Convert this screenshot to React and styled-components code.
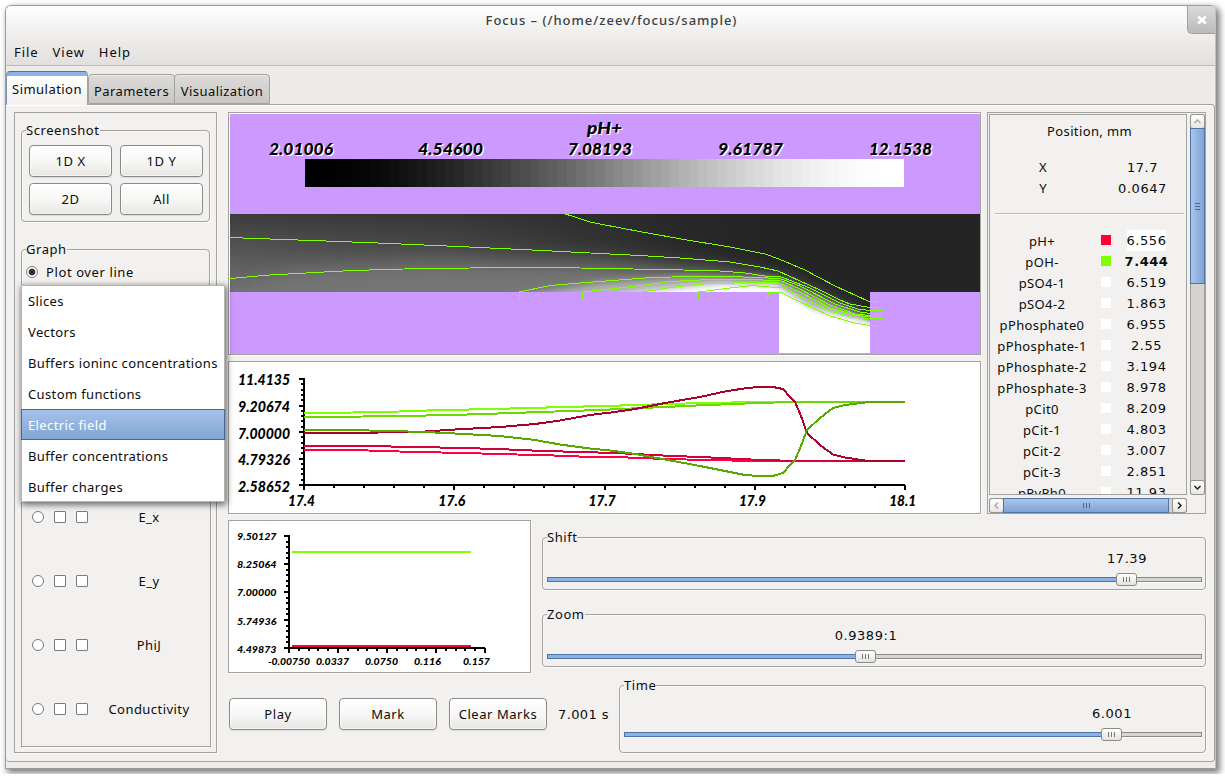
import React from "react";
import styled, { createGlobalStyle, css } from "styled-components";

const Global = createGlobalStyle`
  *, *::before, *::after { box-sizing: border-box; }
  body {
    margin: 0;
    background: #fff;
    color: #0c0c0c;
    font: 13px/18px "Noto Sans", "Open Sans", sans-serif;
    letter-spacing: 0.37px;
    overflow: hidden;
  }
`;

const LINE = "#a3a29f";
const digits = css`font-family: "DejaVu Sans", sans-serif; font-size: 13px; letter-spacing: 0.55px;`;

const Window = styled.div`
  width: 1211px;
  height: 764px;
  margin: 5px;
  display: flex;
  flex-direction: column;
  background: #edecea;
  border: 1px solid #9b9b9a;
  border-right-color: #c2c2c0;
  border-radius: 6px 6px 0 0;
  box-shadow: 3px 3px 6px 1px rgba(0, 0, 0, 0.5);
`;

const Header = styled.header`
  height: 60px;
  flex: none;
  border-bottom: 1px solid #bcbbb9;
  border-radius: 5px 5px 0 0;
  background: linear-gradient(#fefefe, #efeeed 50%, #e1e0de);
`;

const TitleBar = styled.div`
  height: 28px;
  display: grid;
  grid-template-columns: 1fr 28px;
`;

const Title = styled.div`
  padding: 5px 0 0 6px;
  text-align: center;
  color: #3a3f42;
  font-weight: 500;
  letter-spacing: 0.99px;
  text-indent: 24px;
`;

const Close = styled.div`
  display: grid;
  place-items: center;
  border: solid #a2a2a1;
  border-width: 0 0 1px 1px;
  border-radius: 0 4px 0 5px;
  background: linear-gradient(#dadada, #bababa);
`;

const MenuBar = styled.nav`
  display: flex;
  gap: 14px;
  padding: 9px 8px 0;
  letter-spacing: 0.95px;
`;

const Tabs = styled.div`
  height: 38px;
  flex: none;
  display: flex;
  align-items: flex-end;
`;

const Tab = styled.div`
  width: ${(p) => p.$w}px;
  height: 30px;
  margin-right: ${(p) => (p.$active ? 0 : -1)}px;
  padding-top: 7px;
  text-align: center;
  letter-spacing: 0.45px;
  white-space: nowrap;
  border: 1px solid ${LINE};
  border-radius: 4px 4px 0 0;
  background: linear-gradient(#dddcda, #c8c7c4);
  box-shadow: inset 0 1px #eee;
  ${(p) => p.$active && css`
    height: 34px;
    padding-top: 8px;
    border-bottom: 0;
    border-top-color: #4d74a9;
    border-left-color: #8096b5;
    background: linear-gradient(#8fb3e0 0 4px, #fff 4px, #f2f1ef);
    box-shadow: none;
    margin-bottom: -1px;
    position: relative;
    z-index: 1;
  `}
`;

const Page = styled.main`
  height: 658px;
  width: 1209px;
  padding: 7px 8px 0;
  display: flex;
  gap: 11px;
  background: #f2f1ef;
  border: 1px solid ${LINE};
  border-width: 1px 1px 1px 0;
  border-radius: 0 4px 4px 4px;
  box-shadow: inset 0 1px #fff;
`;

const Side = styled.aside`
  width: 203px;
  height: 641px;
  flex: none;
  padding: 17px 6px 5px;
  display: flex;
  flex-direction: column;
  border: 1px solid ${LINE};
  box-shadow: 1px 1px #fbfbfa;
  position: relative;
`;

const Group = styled.section`
  width: ${(p) => p.$w}px;
  height: ${(p) => p.$h}px;
  flex: none;
  border: 1px solid ${LINE};
  border-radius: 4px;
  box-shadow: 1px 1px #fbfbfa, inset 1px 1px #fafaf9;
`;

const GraphGroup = styled(Group)`
  margin-top: 27px;
`;

const TimeGroup = styled(Group)`
  margin-left: auto;
`;

const Legend = styled.div`
  width: max-content;
  height: 18px;
  margin: -10px 0 0 4px;
  letter-spacing: 0.55px;
  background: #f2f1ef;
`;

const ButtonGrid = styled.div`
  display: grid;
  grid-template-columns: 83px 83px;
  gap: 6px 8px;
  padding: 6px 7px 0;
`;

const Button = styled.button`
  width: ${(p) => (p.$w ? p.$w + "px" : "auto")};
  height: 32px;
  padding: 0 0 1px;
  font: inherit;
  letter-spacing: 0.55px;
  color: inherit;
  white-space: nowrap;
  border: 1px solid #8c8b89;
  border-radius: 4px;
  background: linear-gradient(#fff, #f6f6f5 55%, #e7e6e4);
  box-shadow: inset 0 0 0 1px rgba(255, 255, 255, 0.6), 0 1px 1px #dcdbd9;
`;

const GraphMode = styled.div`
  display: flex;
  align-items: center;
  gap: 8px;
  padding: 5px 0 0 4px;
  letter-spacing: 0.6px;
`;

const Radio = styled.i`
  width: 12px;
  height: 12px;
  border: 1px solid #7c7b79;
  border-radius: 50%;
  background: ${(p) => (p.$on ? "radial-gradient(#2e3436 0 3px, #fff 3.8px)" : "#fff")};
`;

const Check = styled.i`
  width: 12px;
  height: 12px;
  border: 1px solid #7c7b79;
  border-radius: 1px;
  background: #fff;
`;

const FieldList = styled.div`
  width: 190px;
  height: 461px;
  margin-top: -1px;
  padding-top: 199px;
  border: 1px solid ${LINE};
  border-top: 0;
  box-shadow: 1px 1px #fbfbfa;
`;

const FieldRow = styled.div`
  height: 64px;
  display: grid;
  grid-template-columns: 22px 22px 22px 1fr;
  align-items: center;
  justify-items: center;
  padding: 0 5px;
`;

const FieldName = styled.span`
  letter-spacing: 0.45px;
`;

const Popup = styled.div`
  position: absolute;
  left: 6px;
  top: 172px;
  width: 204px;
  z-index: 3;
  background: #fff;
  border-radius: 1px;
  box-shadow: inset 0 0 0 1px #b4b4b2, 1px 2px 6px 1px rgba(0, 0, 0, 0.55);
`;

const Item = styled.div`
  height: 31px;
  padding: 7px 0 0 7px;
  white-space: nowrap;
  ${(p) => p.$active && css`
    color: #fff;
    background: linear-gradient(#a6c3ea, #81a5d5);
    box-shadow: inset 0 0 0 1px #47689b;
  `}
`;

const Work = styled.div`
  width: 978px;
`;

const Row = styled.div`
  display: flex;
  gap: ${(p) => p.$gap}px;
  margin-top: ${(p) => p.$mt || 0}px;
`;

const Column = styled.div`
  display: flex;
  flex-direction: column;
  gap: ${(p) => p.$gap}px;
  padding-top: ${(p) => p.$pt || 0}px;
`;

const Canvas = styled.div`
  width: ${(p) => p.$w}px;
  height: ${(p) => p.$h}px;
  padding: ${(p) => p.$pad || 0}px;
  border: 1px solid ${LINE};
  background: #fff;
  box-shadow: 1px 1px #fbfbfa;
  svg { display: block; }
  text {
    font-family: Lato, "Open Sans", sans-serif;
    font-weight: 900;
    font-style: italic;
    letter-spacing: 0;
  }
`;

const Probe = styled.div`
  width: 219px;
  height: 402px;
  padding: 1px;
  display: grid;
  grid-template-columns: 198px 15px;
  grid-template-rows: 381px 15px;
  gap: 3px;
  border: 1px solid ${LINE};
`;

const View = styled.div`
  border: 1px solid ${LINE};
  overflow: hidden;
  padding-top: 7px;
`;

const Heading = styled.div`
  text-align: center;
  padding-left: 3px;
  height: 35px;
`;

const Position = styled.div`
  height: 21px;
  display: grid;
  grid-template-columns: 106px 1fr;
  text-align: center;
  line-height: 21px;
`;

const Num = styled.span`
  ${digits}
  padding-left: 3px;
`;

const Rule = styled.hr`
  height: 2px;
  margin: 14px 2px 15px 5px;
  border: 0;
  background: linear-gradient(#bcbbb9 50%, #fff 50%);
`;

const Species = styled.div`
  height: 21px;
  display: grid;
  grid-template-columns: 104px 17px 65px;
  align-items: center;
  justify-items: center;
  white-space: nowrap;
`;

const Swatch = styled.i`
  width: 10px;
  height: 10px;
  justify-self: end;
  margin-bottom: 2px;
  background: ${(p) => p.$c};
`;

const Value = styled.span`
  ${digits}
  height: 21px;
  line-height: 21px;
  margin-left: 6px;
  font-weight: ${(p) => (p.$bold ? 700 : 400)};
  background: ${(p) => (p.$boxed ? "#fff" : "none")};
`;

const Scroll = styled.div`
  display: flex;
  flex-direction: ${(p) => (p.$vertical ? "column" : "row")};
  border: 1px solid #a09f9c;
  border-radius: 3px;
  background: #d4d3d1;
`;

const Arrow = styled.div`
  flex: 0 0 13px;
  display: grid;
  place-items: center;
  border-radius: 2px;
  background: linear-gradient(#fefefe, #e8e7e5);
  box-shadow: 0 0 0 1px #94938f;
`;

const Thumb = styled.div`
  flex: 0 0 ${(p) => p.$size}px;
  margin: ${(p) => (p.$vertical ? "0 -1px" : "-1px 0")};
  display: grid;
  place-items: center;
  border: 1px solid #4e74a8;
  background: linear-gradient(${(p) => (p.$vertical ? "to right" : "to bottom")}, #a9c5eb, #7fa3d4);
`;

const Spacer = styled.div`flex: 1;`;

const Slider = styled.div`
  padding: ${(p) => p.$top}px 3px 0 4px;
`;

const SliderValue = styled.div`
  ${digits}
  width: 82px;
  text-align: center;
`;

const Track = styled.div`
  height: 13px;
  margin-top: 5px;
  display: flex;
  align-items: center;
`;

const Fill = styled.div`
  height: 5px;
  border: 1px solid #4e74a8;
  border-right: 0;
  background: #8db1e0;
`;

const Rest = styled.div`
  flex: 1;
  height: 5px;
  border: 1px solid #8c8b89;
  border-left: 0;
  background: #d6d5d3;
  box-shadow: 0 1px #fff;
`;

const Handle = styled.div`
  width: 21px;
  height: 13px;
  display: grid;
  place-items: center;
  border: 1px solid #8c8b89;
  border-radius: 3px;
  background: linear-gradient(#fff, #e4e3e1);
`;

const Clock = styled.span`
  ${digits}
  letter-spacing: 0.4px;
  padding-top: 8px;
  margin-left: -1px;
  white-space: nowrap;
`;

const ButtonRow = styled.div`
  display: flex;
  gap: 12px;
  padding: 13px 0 0 1px;
  align-items: flex-start;
`;

const ShapedText = ({ x1, x2, y, size, halo, children }) => (
  <>
    {halo && (
      <text x={x1 + 1.4} y={y + 1.4} fontSize={size} textLength={x2 - x1} lengthAdjust="spacingAndGlyphs" fill="#fff" aria-hidden="true">{children}</text>
    )}
    <text x={x1} y={y} fontSize={size} textLength={x2 - x1} lengthAdjust="spacingAndGlyphs">{children}</text>
  </>
);

const Grip = ({ vertical, color = "#47689b" }) => (
  <svg width="9" height="9" shapeRendering="crispEdges" stroke={color}>
    <path d={vertical ? "M2 1.5h5M2 4.5h5M2 7.5h5" : "M1.5 2v5M4.5 2v5M7.5 2v5"} />
  </svg>
);

const Chevron = ({ d, muted }) => (
  <svg width="9" height="9" fill="none" stroke={muted ? "#aaa9a7" : "#222"} strokeWidth="1.5"><path d={d} /></svg>
);

const smooth = (t) => t * t * (3 - 2 * t);
const bands = Array.from({ length: 64 }, (_, i) => {
  const v = Math.round(255 * smooth(i / 63));
  return `rgb(${v},${v},${v})`;
});

const streams = [
  "565.5,206 565.5,214 590,222 600,224 642,232 687,240 730,247 765,254 779,259 805,270 835,286 868,301 883,301.5",
  "230,237.5 270,239 326,241 378,243 424,245 469,247 511,249 552,251 600,253.5 640,255.5 680,258 730,262 760,267 778,271 800,281 820,290 840,300 850,304 870,307.5 883,307.5",
  "230,278.5 270,275 306,273 352,270.5 404,269 470,268 560,267.5 600,268.5 665,269.5 720,271 745,273 765,276 780,276.5 810,288 840,303 858,309 870,310.5 883,310.5",
  "519.5,300 519.5,292 550,285.5 580,283 600,281.5 645,278 685,276.5 730,276.5 780,278.5 800,286 835,304 860,312 870,313.5 883,313.5",
  "582.5,300 582.5,292 610,289 645,285 670,281.5 700,280 745,279.5 780,280.5 800,289 830,305 855,314 870,315.5 883,315.5",
  "641.5,300 641.5,292 675,287 703,284 750,282.5 779,283 800,292 830,308 855,315 870,317 883,317",
  "698.5,300 698.5,292 730,288 752,285.5 770,287 783,288 800,296 830,311 850,317 870,318.5 883,318.5",
  "767.5,300 768.5,292.5 781,292.5 800,302 815,309 830,316 855,323 870,325.5 883,325.5",
];

const scalarLabels = [
  [269, 333, "2.01006"], [418, 483, "4.54600"], [568, 632, "7.08193"], [718, 783, "9.61787"], [869, 932, "12.1538"],
];

const FlowField = () => (
  <svg width="750" height="240" viewBox="230 114 750 240">
    <defs>
      <linearGradient id="depth" x1="0" y1="0" x2="0" y2="1">
        <stop offset="0" stopColor="#3c3c3c" /><stop offset="0.5" stopColor="#585858" /><stop offset="1" stopColor="#727272" />
      </linearGradient>
      <linearGradient id="fade" x1="0" y1="0" x2="1" y2="0">
        <stop offset="0" stopColor="#fff" /><stop offset="0.3" stopColor="#bbb" /><stop offset="0.6" stopColor="#222" /><stop offset="0.72" stopColor="#000" />
      </linearGradient>
      <mask id="leftside"><rect x="230" y="214" width="750" height="78" fill="url(#fade)" /></mask>
      <clipPath id="channel"><path d="M230 214H980V292H870V353H779V292H230Z" /></clipPath>
      <filter id="soft9" x="-10%" y="-60%" width="120%" height="220%"><feGaussianBlur stdDeviation="10" /></filter>
      <filter id="soft4" x="-10%" y="-60%" width="120%" height="220%"><feGaussianBlur stdDeviation="4.5" /></filter>
      <filter id="soft2" x="-10%" y="-60%" width="120%" height="220%"><feGaussianBlur stdDeviation="3" /></filter>
    </defs>
    <rect x="230" y="114" width="750" height="240" fill="#cc99ff" />
    <g clipPath="url(#channel)">
      <rect x="230" y="214" width="750" height="139" fill="#242424" />
      <rect x="230" y="214" width="750" height="78" fill="url(#depth)" mask="url(#leftside)" />
      <path filter="url(#soft9)" fill="#747474" d="M290 272L420 262L600 262L720 270L785 280L860 318V380H230V300Z" />
      <path filter="url(#soft4)" fill="#b4b4b4" d="M500 300L600 283L690 277L775 279L830 303L874 320V380H500Z" />
      <path filter="url(#soft2)" fill="#fff" d="M575 302L650 291L720 284L776 285L812 309L880 324V380H560Z" />
      <path fill="#fff" d="M779 296L825 318L870 328V353H779Z" />
    </g>
    <g fill="none" stroke="#80ff00" shapeRendering="crispEdges">
      {streams.map((s) => <polyline key={s} points={s} />)}
    </g>
    <g shapeRendering="crispEdges">
      {bands.map((c, i) => <rect key={i} x={305 + i * 9.36} y="159" width="9.5" height="28" fill={c} />)}
    </g>
    <ShapedText x1={587} x2={622} y={133.5} size={17} halo>pH+</ShapedText>
    {scalarLabels.map(([a, b, t]) => <ShapedText key={t} x1={a} x2={b} y={154.5} size={17} halo>{t}</ShapedText>)}
  </svg>
);

const axisPath = (x0, y0, x1, y1) => {
  let d = `M${x0} ${y0 - 1}V${y1}H${x1}`;
  for (let i = 0; i <= 20; i++) {
    const major = i % 5 === 0;
    const y = Math.round(y0 + ((y1 - y0) * i) / 20);
    const x = Math.round(x0 + ((x1 - x0) * i) / 20);
    d += `M${x0} ${y}h${major ? -5 : -3}M${x} ${y1}v${major ? 5 : 3}`;
  }
  return d;
};

const curves = [
  ["#ff0040", "304,450 353,450 399,451.5 441,452.5 481,453.5 517,454.5 554,455.5 591,457 628,457.5 665,459 707,460 755,461 905,461"],
  ["#80ff00", "304,413 353,412.5 399,411.5 441,410 481,409.3 517,408.3 554,407.3 591,406.3 628,405.3 665,404 707,403 755,402 905,402"],
  ["#d4003a", "304,446 363,446 418,447 461,448 498,449 532,450.5 569,451.7 615,453 665,455.6 707,457.3 735,458.7 755,459.7 795,461 905,461"],
  ["#6cd800", "304,417 363,416.5 418,415.7 461,414.7 498,413.5 532,412.3 569,411 600,410 641,408 665,407 700,405.3 735,404 755,403 795,402 905,402"],
  ["#aa002b", "304,433 348,433 390,432.3 425,431.5 455,429.5 500,427 535,424 560,420.5 590,415 615,412 635,409 665,403 700,397 725,391.5 745,388.3 758,387 773,387 783,389 790,397 795,402 801,416 807,433 820,445 833,454.5 845,457.5 865,460.5 880,461 905,461"],
  ["#55aa00", "304,430 348,430 390,431 425,432 455,433.5 500,436 535,440 560,444.5 590,448.5 615,451 635,454 665,459.5 700,466 725,471 745,475 758,476 773,476 783,473 790,465 795,460 801,446 807,430 820,418 833,408 845,405 865,402.5 880,402 905,402"],
];

const LineChart = () => (
  <svg width="751" height="151" viewBox="229 362 751 151">
    <g shapeRendering="crispEdges" fill="none" strokeWidth="2">
      <path d={axisPath(304, 379, 905, 485)} stroke="#000" />
      {curves.map(([c, p]) => <polyline key={c} points={p} stroke={c} />)}
    </g>
    {["11.4135", "9.20674", "7.00000", "4.79326", "2.58652"].map((t, i) => (
      <ShapedText key={t} x1={238} x2={290} y={385 + i * 26.8} size={15}>{t}</ShapedText>
    ))}
    {["17.4", "17.6", "17.7", "17.9", "18.1"].map((t, i) => (
      <ShapedText key={t} x1={288 + i * 150.3} x2={315 + i * 150.3} y={506} size={15}>{t}</ShapedText>
    ))}
  </svg>
);

const crossTicks = [[268, 310, "-0.00750"], [316, 349, "0.0337"], [365, 398, "0.0750"], [414, 441, "0.116"], [463, 490, "0.157"]];

const CrossChart = () => (
  <svg width="301" height="151" viewBox="229 521 301 151">
    <g shapeRendering="crispEdges" fill="none" strokeWidth="2">
      <path d={axisPath(289, 536, 485, 648)} stroke="#000" />
      <path d="M292 552H471" stroke="#80ff00" />
      <path d="M292 646H471" stroke="#ff0040" />
    </g>
    {["9.50127", "8.25064", "7.00000", "5.74936", "4.49873"].map((t, i) => (
      <ShapedText key={t} x1={237} x2={276.5} y={540 + i * 28.2} size={10}>{t}</ShapedText>
    ))}
    {crossTicks.map(([a, b, t]) => <ShapedText key={t} x1={a} x2={b} y={665} size={10}>{t}</ShapedText>)}
  </svg>
);

const ValueSlider = ({ value, fill, top }) => (
  <Slider $top={top}>
    <SliderValue style={{ marginLeft: fill - 30 }}>{value}</SliderValue>
    <Track>
      <Fill style={{ width: fill }} />
      <Handle><Grip color="#777674" /></Handle>
      <Rest />
    </Track>
  </Slider>
);

const species = [
  ["pH+", "6.556", "#ff0033"], ["pOH-", "7.444", "#80ff00"], ["pSO4-1", "6.519"], ["pSO4-2", "1.863"],
  ["pPhosphate0", "6.955"], ["pPhosphate-1", "2.55"], ["pPhosphate-2", "3.194"], ["pPhosphate-3", "8.978"],
  ["pCit0", "8.209"], ["pCit-1", "4.803"], ["pCit-2", "3.007"], ["pCit-3", "2.851"], ["pPyPh0", "11.93"],
];

const options = ["Slices", "Vectors", "Buffers ioninc concentrations", "Custom functions", "Electric field", "Buffer concentrations", "Buffer charges"];

export default function App() {
  return (
    <>
      <Global />
      <Window>
        <Header>
          <TitleBar>
            <Title>Focus – (/home/zeev/focus/sample)</Title>
            <Close>
              <svg width="10" height="10" stroke="#fff" strokeWidth="2.6"><path d="M1.2 1.5l7.6 7M8.8 1.5l-7.6 7" /></svg>
            </Close>
          </TitleBar>
          <MenuBar><span>File</span><span>View</span><span>Help</span></MenuBar>
        </Header>
        <Tabs>
          <Tab $w={82} $active>Simulation</Tab>
          <Tab $w={87}>Parameters</Tab>
          <Tab $w={96}>Visualization</Tab>
        </Tabs>
        <Page>
          <Side>
            <Group $w={189} $h={92}>
              <Legend>Screenshot</Legend>
              <ButtonGrid>
                <Button>1D X</Button><Button>1D Y</Button><Button>2D</Button><Button>All</Button>
              </ButtonGrid>
            </Group>
            <GraphGroup $w={189} $h={38}>
              <Legend>Graph</Legend>
              <GraphMode><Radio $on />Plot over line</GraphMode>
            </GraphGroup>
            <FieldList>
              {["E_x", "E_y", "PhiJ", "Conductivity"].map((n) => (
                <FieldRow key={n}><Radio /><Check /><Check /><FieldName>{n}</FieldName></FieldRow>
              ))}
            </FieldList>
            <Popup>
              {options.map((o) => <Item key={o} $active={o === "Electric field"}>{o}</Item>)}
            </Popup>
          </Side>
          <Work>
            <Row $gap={6}>
              <Column $gap={6}>
                <Canvas $w={753} $h={243} $pad={1}><FlowField /></Canvas>
                <Canvas $w={753} $h={153}><LineChart /></Canvas>
              </Column>
              <Probe>
                <View>
                  <Heading>Position, mm</Heading>
                  <Position><span>X</span><Num>17.7</Num></Position>
                  <Position><span>Y</span><Num>0.0647</Num></Position>
                  <Rule />
                  {species.map(([n, v, c], i) => (
                    <Species key={n}><span>{n}</span><Swatch $c={c || "#fff"} /><Value $boxed={i === 0} $bold={i === 1}>{v}</Value></Species>
                  ))}
                </View>
                <Scroll $vertical>
                  <Arrow><Chevron muted d="M1.5 6l3-3 3 3" /></Arrow>
                  <Thumb $vertical $size={156}><Grip vertical /></Thumb>
                  <Spacer />
                  <Arrow><Chevron d="M1.5 3l3 3 3-3" /></Arrow>
                </Scroll>
                <Scroll>
                  <Arrow><Chevron muted d="M6 1.5l-3 3 3 3" /></Arrow>
                  <Thumb $size={166}><Grip /></Thumb>
                  <Spacer />
                  <Arrow><Chevron d="M3 1.5l3 3-3 3" /></Arrow>
                </Scroll>
              </Probe>
            </Row>
            <Row $gap={11} $mt={6}>
              <Canvas $w={303} $h={153}><CrossChart /></Canvas>
              <Column $gap={24} $pt={17}>
                <Group $w={664} $h={53}>
                  <Legend>Shift</Legend>
                  <ValueSlider value="17.39" fill={569} top={4} />
                </Group>
                <Group $w={664} $h={53}>
                  <Legend>Zoom</Legend>
                  <ValueSlider value="0.9389:1" fill={308} top={4} />
                </Group>
              </Column>
            </Row>
            <Row $gap={0} $mt={12}>
              <ButtonRow>
                <Button $w={98}>Play</Button><Button $w={98}>Mark</Button><Button $w={98}>Clear Marks</Button>
                <Clock>7.001 s</Clock>
              </ButtonRow>
              <TimeGroup $w={587} $h={68}>
                <Legend>Time</Legend>
                <ValueSlider value="6.001" fill={477} top={11} />
              </TimeGroup>
            </Row>
          </Work>
        </Page>
      </Window>
    </>
  );
}
